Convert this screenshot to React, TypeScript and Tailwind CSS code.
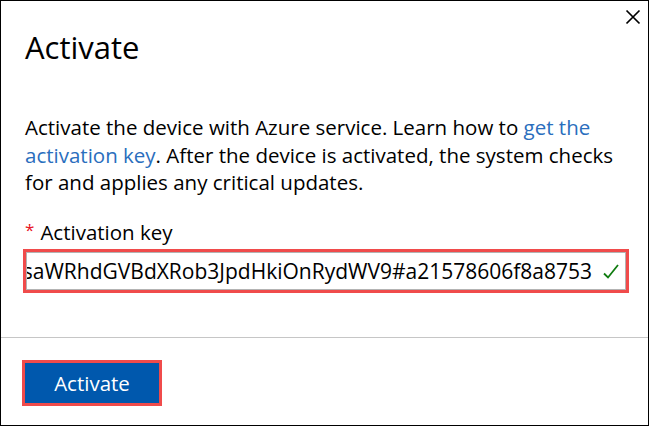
import React from "react";

export default function App() {
  const font = { fontFamily: '"Open Sans", "Noto Sans", sans-serif' };
  return (
    <div className="w-[649px] h-[427px] bg-white" style={font}>
      <div className="relative flex h-[426px] w-[649px] flex-col border border-black bg-white text-black">
        <button className="absolute right-[7px] top-[8px] h-[16px] w-[16px]" aria-label="Close">
          <svg width="16" height="16" viewBox="0 0 16 16">
            <path d="M1.5 1.5 L14.5 14.5 M14.5 1.5 L1.5 14.5" stroke="#000" strokeWidth="1.7" fill="none" />
          </svg>
        </button>

        <div className="flex h-[336px] flex-col pl-[24px] pr-[10px]">
          <h1 className="mt-[26px] text-[31px] leading-[40px] font-medium">Activate</h1>

          <p className="mt-[47px] whitespace-nowrap text-[20.5px] leading-[27.5px]">
            Activate the device with Azure service. Learn how to{" "}
            <a className="text-[#2a6ebd]">get the</a>
            <br />
            <a className="text-[#2a6ebd]">activation key</a>. After the device is activated, the system checks
            <br />
            for and applies any critical updates.
          </p>

          <div className="mt-[22px] flex items-start text-[20.5px] leading-[27.5px]">
            <span className="mr-[6px] text-[17px] leading-[22px] text-[#e81123]">*</span>
            <span>Activation key</span>
          </div>

          <div className="ml-[-2px] mt-[3px] h-[44px] w-[606px] border-[3px] border-[#f04b4b]">
            <div className="flex h-full w-full items-center border border-[#b3b3b3] bg-white pr-[6px]">
              <div className="flex flex-1 justify-end overflow-hidden whitespace-nowrap text-[21px] leading-[28px]">
                <span>
                  eyJpZGVudGl0eVZhbGlkYXRlQXV0aG9yaXR5IjpmYWxzZSwidmFsaWRhdGVBdXRob3JpdHkiOnRydWV9#a21578606f8a8753
                </span>
              </div>
              <svg className="ml-[11px] shrink-0" width="16" height="15" viewBox="0 0 16 15">
                <path d="M1 9.5 L5 13.5 L15 1" stroke="#107c10" strokeWidth="1.8" fill="none" />
              </svg>
            </div>
          </div>
        </div>

        <div className="flex h-[88px] flex-col border-t border-[#c6c6c6] pl-[21px] pt-[22px]">
          <div className="w-[140px] border-[3px] border-[#f04b4b]">
            <button className="flex h-[40px] w-[134px] items-center justify-center bg-[#0058ad] text-[20.5px] text-white">
              Activate
            </button>
          </div>
        </div>
      </div>
    </div>
  );
}
